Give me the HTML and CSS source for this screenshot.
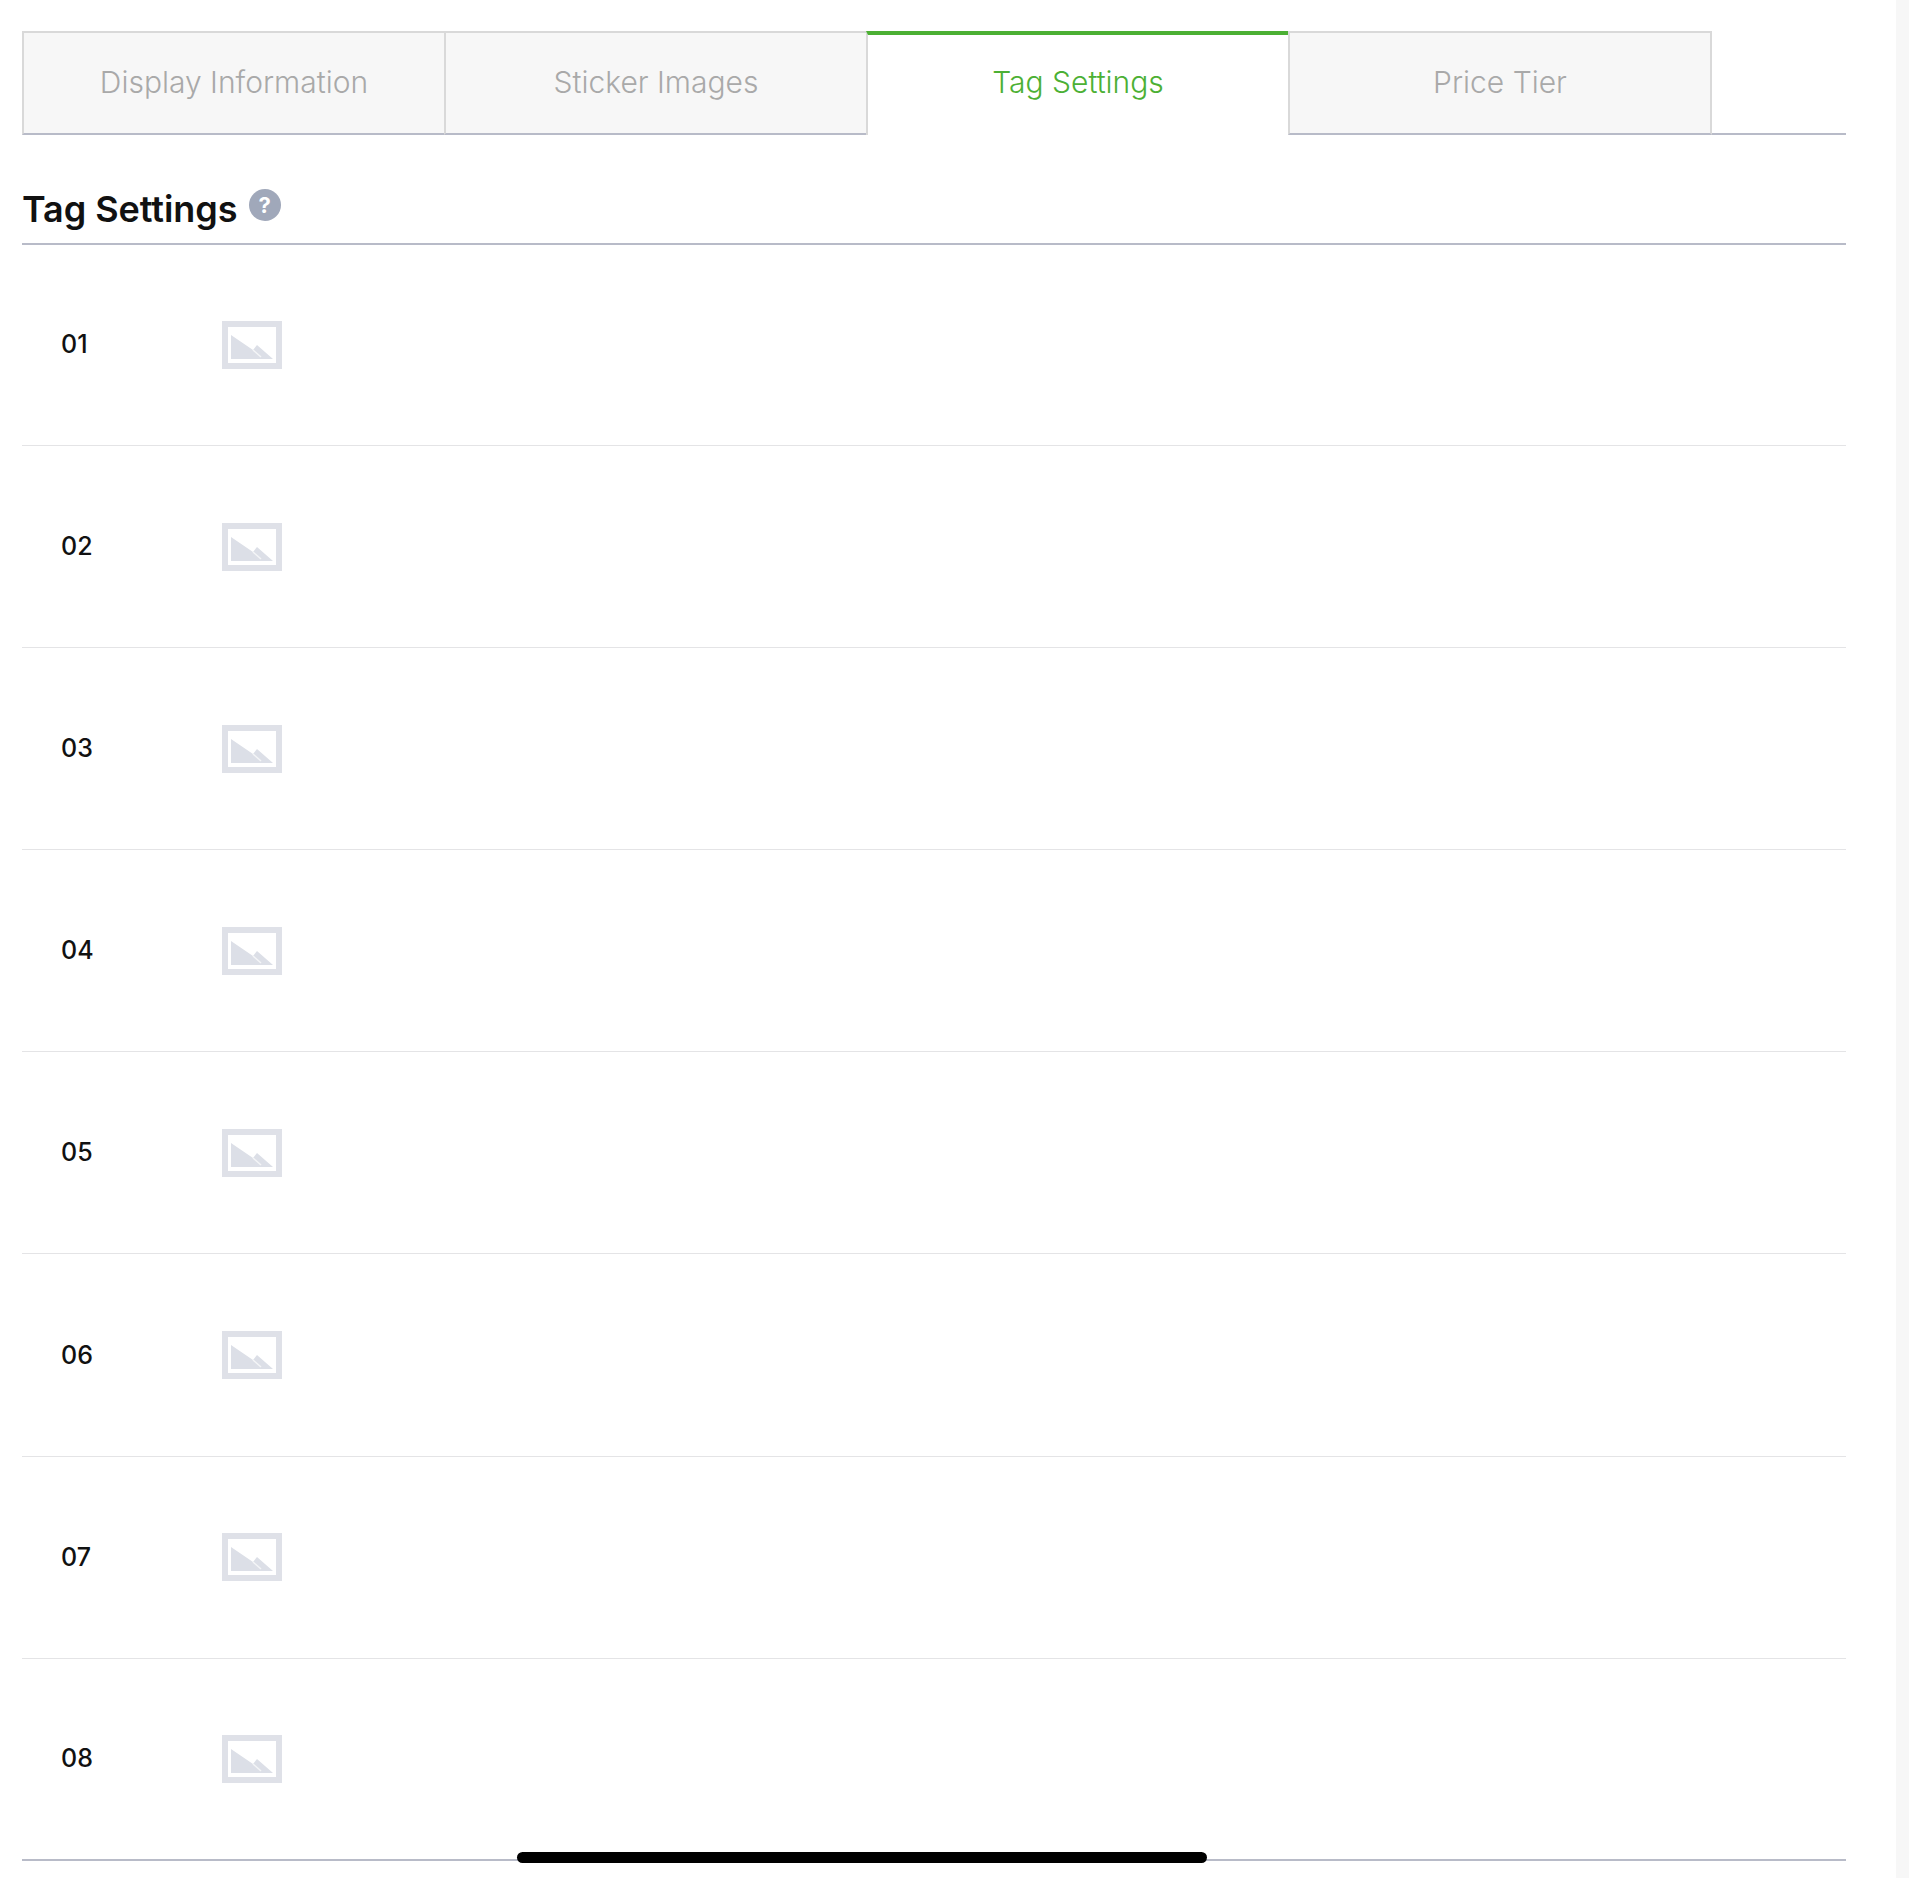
FILE: index.html
```html
<!DOCTYPE html>
<html lang="en">
<head>
<meta charset="utf-8">
<title>Tag Settings</title>
<link rel="stylesheet" href="styles.css">
</head>
<body>
<div class="page">
  <main class="content">
    <nav class="tabs">
      <a class="tab">Display Information</a>
      <a class="tab">Sticker Images</a>
      <a class="tab tab-active">Tag Settings</a>
      <a class="tab">Price Tier</a>
    </nav>
    <h2 class="heading"><span>Tag Settings</span><span class="help">?</span></h2>
    <ul class="rows">
      <li class="row"><span class="num">01</span><svg class="thumb" viewBox="0 0 60 48"><rect class="thumb-frame" x="3" y="3" width="54" height="42"/><path class="thumb-hill" d="M9 14 L31 29 L35 24 L51 38 H9 Z"/><path class="thumb-notch" d="M31 29 L39 36"/></svg></li>
      <li class="row"><span class="num">02</span><svg class="thumb" viewBox="0 0 60 48"><rect class="thumb-frame" x="3" y="3" width="54" height="42"/><path class="thumb-hill" d="M9 14 L31 29 L35 24 L51 38 H9 Z"/><path class="thumb-notch" d="M31 29 L39 36"/></svg></li>
      <li class="row"><span class="num">03</span><svg class="thumb" viewBox="0 0 60 48"><rect class="thumb-frame" x="3" y="3" width="54" height="42"/><path class="thumb-hill" d="M9 14 L31 29 L35 24 L51 38 H9 Z"/><path class="thumb-notch" d="M31 29 L39 36"/></svg></li>
      <li class="row"><span class="num">04</span><svg class="thumb" viewBox="0 0 60 48"><rect class="thumb-frame" x="3" y="3" width="54" height="42"/><path class="thumb-hill" d="M9 14 L31 29 L35 24 L51 38 H9 Z"/><path class="thumb-notch" d="M31 29 L39 36"/></svg></li>
      <li class="row"><span class="num">05</span><svg class="thumb" viewBox="0 0 60 48"><rect class="thumb-frame" x="3" y="3" width="54" height="42"/><path class="thumb-hill" d="M9 14 L31 29 L35 24 L51 38 H9 Z"/><path class="thumb-notch" d="M31 29 L39 36"/></svg></li>
      <li class="row"><span class="num">06</span><svg class="thumb" viewBox="0 0 60 48"><rect class="thumb-frame" x="3" y="3" width="54" height="42"/><path class="thumb-hill" d="M9 14 L31 29 L35 24 L51 38 H9 Z"/><path class="thumb-notch" d="M31 29 L39 36"/></svg></li>
      <li class="row"><span class="num">07</span><svg class="thumb" viewBox="0 0 60 48"><rect class="thumb-frame" x="3" y="3" width="54" height="42"/><path class="thumb-hill" d="M9 14 L31 29 L35 24 L51 38 H9 Z"/><path class="thumb-notch" d="M31 29 L39 36"/></svg></li>
      <li class="row"><span class="num">08</span><svg class="thumb" viewBox="0 0 60 48"><rect class="thumb-frame" x="3" y="3" width="54" height="42"/><path class="thumb-hill" d="M9 14 L31 29 L35 24 L51 38 H9 Z"/><path class="thumb-notch" d="M31 29 L39 36"/></svg></li>
    </ul>
  </main>
  <aside class="rail"></aside>
</div>
<div class="home-bar"></div>
</body>
</html>
```
FILE: styles.css
```css
* { box-sizing: border-box; }
html, body { margin: 0; padding: 0; height: 100%; background: #fff; overflow: hidden; }
body { font-family: "Inter", "Liberation Sans", sans-serif; color: #111; }
.page { display: flex; justify-content: space-between; height: 1878px; }
.content { width: 1846px; padding: 31px 0 0 22px; }
.rail { width: 13px; background: #f7f7f7; }

.tabs { display: flex; height: 104px; border-bottom: 2px solid #b8bbc8; }
.tab {
  width: 422px; height: 104px;
  display: flex; align-items: center; justify-content: center;
  padding-bottom: 2px;
  background: #f7f7f7;
  border: 2px solid #d9d9d9; border-right-width: 0;
  border-bottom: 2px solid #b8bbc8;
  font-size: 30px; font-weight: 300; color: #a9a9a9;
}
.tab:nth-child(4) { width: 424px; border-right-width: 2px; }
.tab-active {
  background: #fff; color: #4cb034;
  padding-bottom: 6px;
  border-top: 4px solid #4cb034; border-bottom: 0;
}

.heading {
  margin: 0; height: 110px; padding-top: 52px;
  display: flex; align-items: flex-start; gap: 11px;
  border-bottom: 2px solid #b8bbc8;
  font-size: 36px; font-weight: 600; line-height: 44px; letter-spacing: -0.05px; color: #111;
}
.help {
  width: 32px; height: 32px; margin-top: 2px; border-radius: 50%;
  background: #a0a8ba; color: #fff;
  font-size: 22px; font-weight: 700; line-height: 32px; text-align: center;
}

.rows { list-style: none; margin: -1px 0 0; padding: 0; }
.row {
  height: 202.1px; display: flex; align-items: center; padding-left: 39px;
  border-bottom: 1px solid #e4e4e6;
}
.row:last-child { border-bottom: 2px solid #b8bbc8; }
.num { width: 161px; margin-top: -1px; font-size: 25px; font-weight: 500; color: #111; }
.thumb { width: 60px; height: 48px; display: block; filter: blur(0.5px); }
.thumb-frame { fill: #fff; stroke: #dfe1e8; stroke-width: 6; }
.thumb-hill { fill: #dcdfe7; }
.thumb-notch { fill: none; stroke: #f4f5f7; stroke-width: 1.5; }

.home-bar {
  position: absolute; left: 517px; top: 1852px;
  width: 690px; height: 11px; border-radius: 6px; background: #000;
}
```
